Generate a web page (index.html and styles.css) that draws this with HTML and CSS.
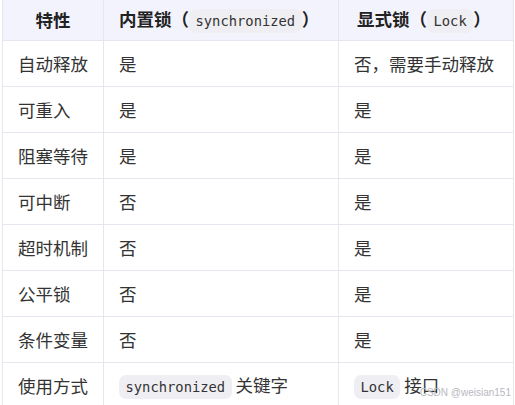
FILE: index.html
```html
<!DOCTYPE html>
<html>
<head>
<meta charset="utf-8">
<link rel="stylesheet" href="styles.css">
</head>
<body>
<table class="cmp">
  <thead>
    <tr>
      <th class="c1">特性</th>
      <th class="c2">内置锁（<code>synchronized</code>）</th>
      <th class="c3">显式锁（<code>Lock</code>）</th>
    </tr>
  </thead>
  <tbody>
    <tr><td>自动释放</td><td>是</td><td>否，需要手动释放</td></tr>
    <tr><td>可重入</td><td>是</td><td>是</td></tr>
    <tr><td>阻塞等待</td><td>是</td><td>是</td></tr>
    <tr><td>可中断</td><td>否</td><td>是</td></tr>
    <tr><td>超时机制</td><td>否</td><td>是</td></tr>
    <tr><td>公平锁</td><td>否</td><td>是</td></tr>
    <tr><td>条件变量</td><td>否</td><td>是</td></tr>
    <tr><td>使用方式</td><td><code>synchronized</code> 关键字</td><td><code>Lock</code> 接口</td></tr>
  </tbody>
</table>
<div class="wm">CSDN @weisian151</div>
</body>
</html>
```

FILE: styles.css
```css
html, body {
  margin: 0;
  padding: 0;
  background: #ffffff;
  overflow: hidden;
}
body {
  padding-left: 2px;
  font-family: "Noto Sans CJK SC", "Noto Sans", sans-serif;
  color: #333333;
}
.cmp {
  border-collapse: collapse;
  width: 512px;
  table-layout: fixed;
  font-size: 17.5px;
}
.cmp th, .cmp td {
  border: 1px solid #e6e7ee;
  text-align: left;
  padding: 0 15px;
  white-space: nowrap;
}
.cmp thead tr {
  background: #f3f3fd;
}
.cmp th {
  border-top: none;
  height: 40px;
  font-weight: 700;
  color: #222222;
  line-height: 24px;
}
.cmp th.c1 { width: 70px; text-align: center; }
.cmp th.c2 { width: 204px; }
.cmp th.c3 { padding-left: 18px; }
.cmp td {
  height: 45px;
  line-height: 25px;
}
code {
  font-family: "DejaVu Sans Mono", monospace;
  font-size: 13.8px;
  font-weight: 400;
  background: #efeff3;
  border-radius: 7px;
  padding: 4px 6.5px;
  color: #333333;
}
.wm {
  position: absolute;
  right: 4px;
  top: 387px;
  font-family: "Liberation Sans", sans-serif;
  font-size: 10px;
  color: #b8b8c0;
}
```
